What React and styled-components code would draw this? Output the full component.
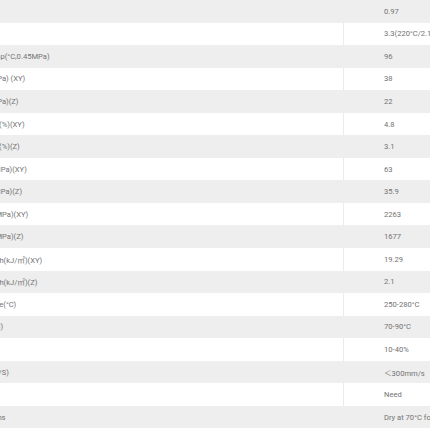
import React from "react";
import styled, { createGlobalStyle } from "styled-components";

const Global = createGlobalStyle`
  html, body { margin: 0; padding: 0; background: #ffffff; overflow: hidden; }
  body { font-family: Roboto, "Noto Sans", "Noto Sans CJK SC", sans-serif; }
`;

const Viewport = styled.div`
  width: 430px;
  height: 430px;
  overflow: hidden;
`;

const Table = styled.div`
  margin-left: -76px;
  width: 560px;
  display: flex;
  flex-direction: column;
`;

const Row = styled.div`
  display: grid;
  grid-template-columns: 420px 1fr;
  height: 22.56px;
  background: ${(p) => (p.$shaded ? "#eeeeee" : "#ffffff")};
`;

const Cell = styled.div`
  box-sizing: border-box;
  display: flex;
  align-items: center;
  white-space: nowrap;
  font-size: 7.6px;
  color: #737373;
  letter-spacing: 0;
`;

const NameCell = styled(Cell)`
  padding-left: 10px;
  border-right: 1px solid ${(p) => (p.$shaded ? "#eeeeee" : "#ebebeb")};
`;

const ValueCell = styled(Cell)`
  padding-left: 40px;
`;

const rows = [
  ["Density(g/cm³)", "0.97"],
  ["Melt index", "3.3(220°C/2.16kg)"],
  ["Heat deflection temp(°C,0.45MPa)", "96"],
  ["Tensile strength(MPa) (XY)", "38"],
  ["Tensile strength(MPa)(Z)", "22"],
  ["Elongation at break(%)(XY)", "4.8"],
  ["Elongation at break(%)(Z)", "3.1"],
  ["Bending strength(MPa)(XY)", "63"],
  ["Bending strength(MPa)(Z)", "35.9"],
  ["Bending modulus(MPa)(XY)", "2263"],
  ["Bending modulus(MPa)(Z)", "1677"],
  ["Izod impact strength(kJ/㎡)(XY)", "19.29"],
  ["Izod impact strength(kJ/㎡)(Z)", "2.1"],
  ["Printing temperature(°C)", "250-280°C"],
  ["Bed temperature(°C)", "70-90°C"],
  ["Fan speed", "10-40%"],
  ["Printing speed(mm/S)", "＜300mm/s"],
  ["Drying", "Need"],
  ["Pre-drying conditions", "Dry at 70°C for 6h"],
];

export default function App() {
  return (
    <Viewport>
      <Global />
      <Table>
        {rows.map(([name, value], i) => {
          const shaded = i % 2 === 0;
          return (
            <Row key={i} $shaded={shaded}>
              <NameCell $shaded={shaded}>{name}</NameCell>
              <ValueCell>{value}</ValueCell>
            </Row>
          );
        })}
      </Table>
    </Viewport>
  );
}
